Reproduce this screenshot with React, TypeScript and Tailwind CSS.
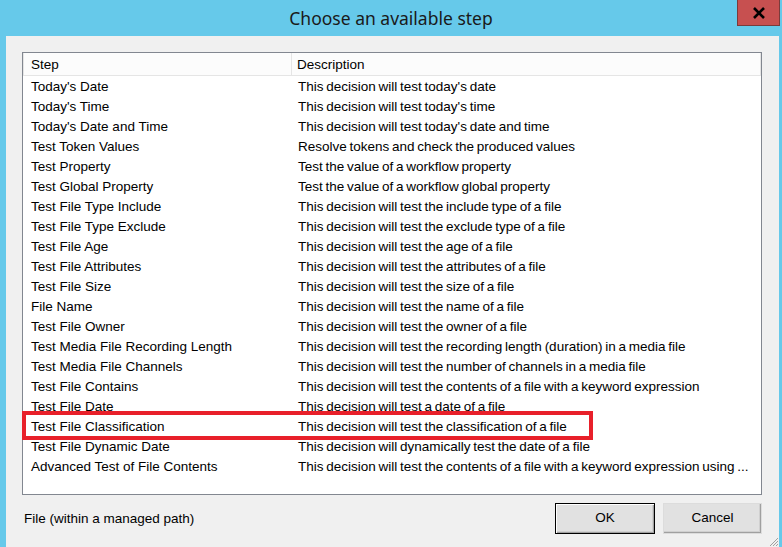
import React from 'react'

const steps: [string, string][] = [
  ["Today's Date", "This decision will test today's date"],
  ["Today's Time", "This decision will test today's time"],
  ["Today's Date and Time", "This decision will test today's date and time"],
  ['Test Token Values', 'Resolve tokens and check the produced values'],
  ['Test Property', 'Test the value of a workflow property'],
  ['Test Global Property', 'Test the value of a workflow global property'],
  ['Test File Type Include', 'This decision will test the include type of a file'],
  ['Test File Type Exclude', 'This decision will test the exclude type of a file'],
  ['Test File Age', 'This decision will test the age of a file'],
  ['Test File Attributes', 'This decision will test the attributes of a file'],
  ['Test File Size', 'This decision will test the size of a file'],
  ['File Name', 'This decision will test the name of a file'],
  ['Test File Owner', 'This decision will test the owner of a file'],
  ['Test Media File Recording Length', 'This decision will test the recording length (duration) in a media file'],
  ['Test Media File Channels', 'This decision will test the number of channels in a media file'],
  ['Test File Contains', 'This decision will test the contents of a file with a keyword expression'],
  ['Test File Date', 'This decision will test a date of a file'],
  ['Test File Classification', 'This decision will test the classification of a file'],
  ['Test File Dynamic Date', 'This decision will dynamically test the date of a file'],
  ['Advanced Test of File Contents', 'This decision will test the contents of a file with a keyword expression using ...'],
]

export default function App() {
  return (
    <div className="w-[782px] h-[547px] bg-[#66c9ea] flex flex-col overflow-hidden font-['Liberation_Sans',Arial,sans-serif] text-[13.5px] text-black">
      {/* Title bar */}
      <div className="relative h-[36px] shrink-0 flex items-center justify-center">
        <span className="font-['Noto_Sans','Open_Sans',sans-serif] text-[17.5px] text-[#1a1a1a]">
          Choose an available step
        </span>
        <button className="absolute top-0 right-[2px] w-[43px] h-[26px] bg-[#c75050] border border-[#7a3b3b] border-t-0 flex items-center justify-center">
          <svg width="14" height="12" viewBox="0 0 14 12">
            <path d="M2 1 L12 11 M12 1 L2 11" stroke="#000" strokeWidth="2.6" />
          </svg>
        </button>
      </div>

      {/* Client area */}
      <div className="relative ml-[6px] w-[773px] flex-1 bg-[#f0f0f0] pt-[16px] pl-[16px]">
        {/* List view */}
        <div className="w-[740px] h-[443px] border border-[#828790] bg-white">
          <div className="flex h-[23px] bg-[#fcfcfc] border-b border-[#e5e5e5] leading-[24px]">
            <div className="w-[269px] pl-[7px] border-r border-[#e5e5e5] border-l border-l-[#e5e5e5]">Step</div>
            <div className="flex-1 pl-[5px] border-r border-[#e5e5e5]">Description</div>
          </div>
          <div className="flex flex-col pt-[1px]">
            {steps.map(([name, desc]) => (
              <div key={name} className="flex h-[20px] leading-[20px] whitespace-nowrap">
                <div className="w-[269px] pl-[8px]">{name}</div>
                <div className="flex-1 pl-[6px] [word-spacing:-1px]">{desc}</div>
              </div>
            ))}
          </div>
        </div>

        {/* Footer */}
        <div className="flex items-center w-[740px] mt-[8px]">
          <span className="pl-[2px] pt-[1px] flex-1">File (within a managed path)</span>
          <button className="w-[100px] h-[31px] bg-[#e1e1e1] border border-black shadow-[inset_1px_1px_0_#fff,inset_-1px_-1px_0_#a0a0a0,inset_-2px_-2px_0_#d0d0d0]">
            OK
          </button>
          <button className="ml-[8px] w-[99px] h-[31px] bg-[#e1e1e1] border border-[#dcdcdc] shadow-[inset_-1px_-1px_0_#a0a0a0,inset_-2px_-2px_0_#d0d0d0]">
            Cancel
          </button>
        </div>

        {/* Resize grip */}
        <svg className="absolute right-0 bottom-0" width="12" height="12" viewBox="0 0 12 12">
          <path d="M11 3 L3 11 M11 6 L6 11 M11 9 L9 11" stroke="#a0a0a0" strokeWidth="1" />
        </svg>

        {/* Highlight annotation */}
        <div className="absolute left-[16px] top-[375px] w-[571px] h-[29px] border-[4px] border-[#e8202a]" />
      </div>
    </div>
  )
}
